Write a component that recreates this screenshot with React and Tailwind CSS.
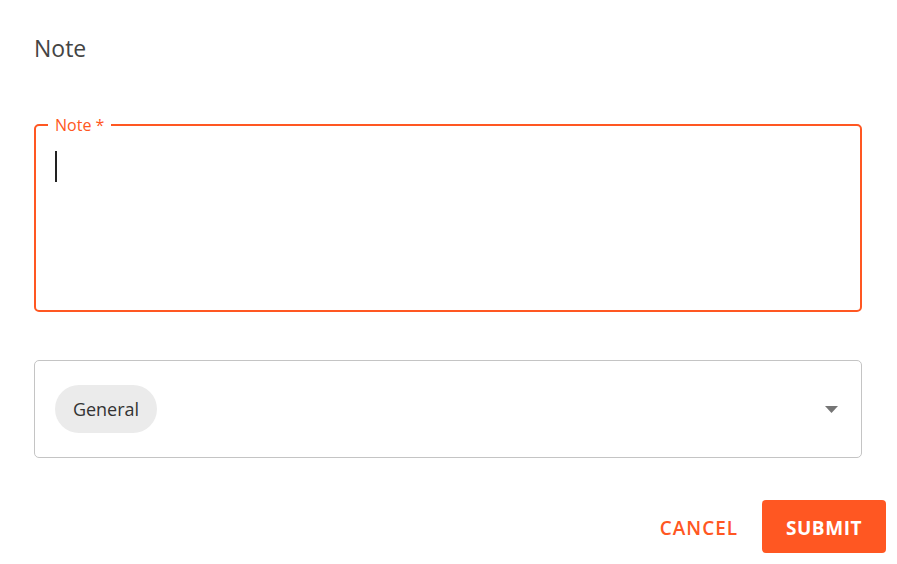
import React from "react";

export default function App() {
  return (
    <div className="w-[897px] h-[564px] bg-white overflow-hidden" style={{ fontFamily: '"Open Sans", "Noto Sans", sans-serif' }}>
      <div className="pl-[34px] pt-[32px]">
        <h2 className="text-[23px] leading-[32px] text-[#444] font-normal">Note</h2>

        <div className="relative mt-[60px] w-[828px] h-[188px] border-2 border-[#ff5722] rounded-[5px]">
          <span className="absolute -top-[11px] left-[12px] px-[7px] bg-white text-[16px] leading-[20px] text-[#ff5722]">
            Note *
          </span>
          <div className="pl-[19px] pt-[25px]">
            <div className="w-[2px] h-[31px] bg-[#222]" />
          </div>
        </div>

        <div className="mt-[48px] w-[828px] h-[98px] border border-[#c4c4c4] rounded-[5px] flex items-center justify-between pl-[20px] pr-[23px]">
          <div className="h-[48px] w-[102px] rounded-full bg-[#ebebeb] flex items-center justify-center text-[18px] text-[#333]">
            General
          </div>
          <svg width="13" height="7" viewBox="0 0 13 7">
            <path d="M0 0h13L6.5 7z" fill="#757575" />
          </svg>
        </div>

        <div className="mt-[42px] w-[852px] flex justify-end items-center gap-[12px]">
          <button className="h-[53px] pt-[3px] px-[12px] text-[19px] font-semibold text-[#ff5722] tracking-[0.05em]">CANCEL</button>
          <button className="h-[53px] pt-[3px] w-[124px] rounded-[4px] bg-[#ff5722] text-white text-[19px] font-bold tracking-[0.03em]">SUBMIT</button>
        </div>
      </div>
    </div>
  );
}
